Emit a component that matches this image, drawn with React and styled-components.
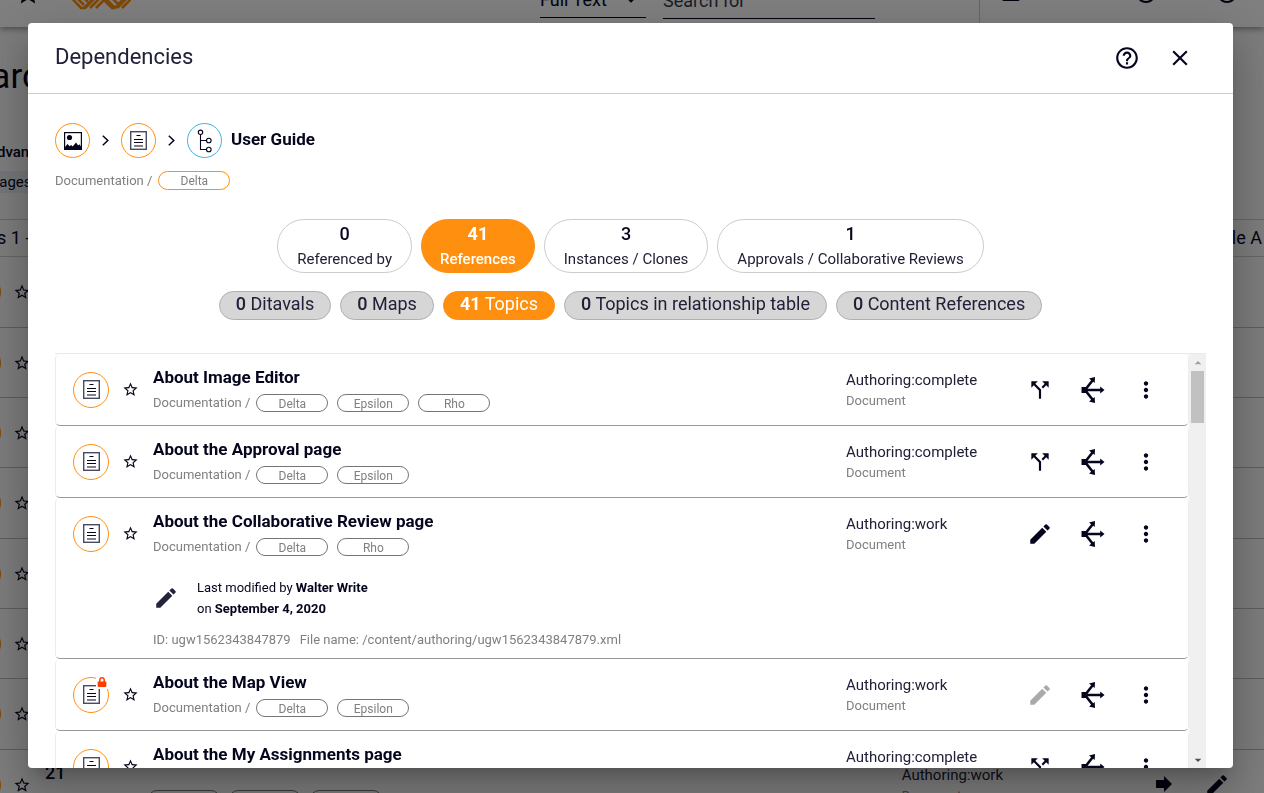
import React from "react";
import styled, { createGlobalStyle } from "styled-components";
import { FaLock } from "react-icons/fa";
import {
  MdArrowDropDown,
  MdArrowDropUp,
  MdCallSplit,
  MdClose,
  MdEdit,
  MdForward,
  MdHelpOutline,
  MdMoreVert,
  MdStar,
  MdStarBorder,
  MdWebAsset,
} from "react-icons/md";

const ink = "#05051e";
const softInk = "#202038";
const orange = "#ff8f0e";
const blue = "#3db1e5";
const grey = "#808080";

const GlobalStyle = createGlobalStyle`
  *, *::before, *::after { box-sizing: border-box; }
  body {
    margin: 0;
    overflow: hidden;
    background: #f8f8f8;
    color: ${ink};
    font-family: Roboto, "Liberation Sans", sans-serif;
    font-size: 15px;
  }
  button, input, select { font: inherit; color: inherit; }
  svg { display: block; flex: none; }
  h1, h2, h3, p, ul, ol { margin: 0; padding: 0; }
  ul, ol { list-style: none; }
`;

/* ---------- page behind the dialog ---------- */

const Page = styled.div`
  height: 100vh;
  overflow: hidden;
`;

const TopBar = styled.header`
  display: flex;
  align-items: center;
  height: 68px;
  margin-top: -41px;
  padding: 0 25px 0 14px;
  background: #fff;
  box-shadow: 0 2px 6px rgba(0, 0, 0, 0.4);
`;

const Brand = styled.div`
  display: flex;
  align-items: center;
  gap: 25px;
  width: 526px;
`;

const SearchTools = styled.form`
  display: flex;
  align-items: flex-end;
  align-self: flex-end;
  gap: 17px;
  padding-bottom: 8px;
`;

const SelectBox = styled.div`
  display: flex;
  align-items: center;
  width: 106px;
  margin-bottom: 1px;
  border-bottom: 1px solid ${ink};
`;

const ModeSelect = styled.select`
  flex: 1;
  min-width: 0;
  height: 36px;
  padding: 0;
  border: 0;
  background: none;
  appearance: none;
  font-size: 18px;
`;

const SearchInput = styled.input`
  width: 212px;
  height: 36px;
  padding: 0;
  border: 0;
  border-bottom: 1px solid ${ink};
  background: none;
  font-size: 18px;
  &::placeholder { color: ${ink}; opacity: 0.8; }
`;

const TopActions = styled.div`
  display: flex;
  flex: 1;
  align-items: center;
  justify-content: space-between;
  align-self: stretch;
  margin-left: 104px;
  padding-left: 19px;
  border-left: 1px solid #ccc;
`;

const AccountActions = styled.div`
  display: flex;
  gap: 57px;
`;

const PageTitle = styled.h1`
  margin: 30px 0 0 -48px;
  font-size: 35px;
  font-weight: 400;
  line-height: 40px;
`;

const PageTab = styled.p`
  margin: 44px 0 8px -13px;
  font-weight: 500;
  line-height: 22px;
`;

const PageSubTab = styled.p`
  width: 160px;
  background: #e6ebf3;
  line-height: 22px;
  text-indent: -18px;
`;

const ResultBar = styled.div`
  display: flex;
  justify-content: space-between;
  height: 38px;
  margin-top: 26px;
  padding-right: 2px;
  border-top: 1px solid #ccc;
  border-bottom: 1px solid #ccc;
  font-size: 18px;
  line-height: 36px;
`;

const ResultCount = styled.span`
  margin-left: -53px;
`;

const ResultRow = styled.li`
  display: flex;
  align-items: center;
  gap: 12px;
  height: 70px;
  margin-left: -35px;
  padding-right: 37px;
  border-bottom: 1px solid #bbb;
  &:nth-child(3n + 1) { height: 71px; }
`;

const ResultName = styled.div`
  flex: 1;
  padding-left: 2px;
`;

const ResultActions = styled.div`
  display: flex;
  gap: 28px;
  width: 212px;
  padding-left: 137px;
`;

/* ---------- dialog ---------- */

const Overlay = styled.div`
  position: fixed;
  inset: 0;
  display: flex;
  padding: 23px 31px 25px 28px;
  background: rgba(0, 0, 0, 0.5);
`;

const Dialog = styled.section`
  display: flex;
  flex: 1;
  flex-direction: column;
  min-width: 0;
  overflow: hidden;
  border-radius: 4px;
  background: #fff;
  box-shadow: 0 11px 15px -7px rgba(0, 0, 0, 0.2), 0 24px 38px 3px rgba(0, 0, 0, 0.14),
    0 9px 46px 8px rgba(0, 0, 0, 0.12);
`;

const DialogHeader = styled.header`
  display: flex;
  align-items: center;
  justify-content: space-between;
  height: 71px;
  padding: 0 40px 0 27px;
  border-bottom: 1px solid #ccc;
`;

const DialogTitle = styled.h2`
  padding-bottom: 3px;
  color: ${softInk};
  font-size: 22px;
  font-weight: 400;
  line-height: 26px;
`;

const HeaderButtons = styled.div`
  display: flex;
  gap: 27px;
`;

const IconButton = styled.button`
  display: grid;
  place-items: center;
  width: ${(p) => p.$size || 26}px;
  height: ${(p) => p.$size || 26}px;
  padding: 0;
  border: 0;
  background: none;
  color: ${(p) => (p.disabled ? "#aaa" : ink)};
`;

const DialogBody = styled.div`
  display: flex;
  flex: 1;
  flex-direction: column;
  min-height: 0;
  padding: 29px 27px 0;
`;

const Breadcrumb = styled.ol`
  display: flex;
  align-items: center;
`;

const Crumb = styled.li`
  display: flex;
  align-items: center;
`;

const CrumbArrow = styled.svg`
  margin: 0 12px;
`;

const Circle = styled.span`
  display: grid;
  flex: none;
  place-items: center;
  width: ${(p) => p.$size || 36}px;
  height: ${(p) => p.$size || 36}px;
  border: 1px solid ${(p) => p.$color || orange};
  border-radius: 50%;
`;

const CrumbName = styled.strong`
  font-size: 17px;
  font-weight: 700;
  line-height: 24px;
  padding: 0 0 3px 9px;
`;

const Meta = styled.div`
  display: flex;
  align-items: center;
  margin-top: ${(p) => p.$top || 0}px;
  color: ${grey};
  font-size: 13px;
  line-height: 18px;
`;

const Tags = styled.ul`
  display: flex;
  gap: 9px;
  margin-left: 6px;
`;

const Tag = styled.li`
  width: 72px;
  height: ${(p) => (p.$accent ? 19 : 18)}px;
  border: 1px solid ${(p) => (p.$accent ? orange : "#757575")};
  border-radius: 10px;
  font-size: 12px;
  line-height: 18px;
  text-align: center;
`;

const TabRow = styled.div`
  display: flex;
  justify-content: center;
  gap: 9px;
  margin-top: ${(p) => p.$top}px;
`;

const Tab = styled.button`
  height: 54px;
  padding: 3px ${(p) => (p.$active ? 18 : 19)}px 0;
  border: 1px solid ${(p) => (p.$active ? orange : "#ccc")};
  border-radius: 27px;
  background: ${(p) => (p.$active ? orange : "#fff")};
  color: ${(p) => (p.$active ? "#fff" : softInk)};
  font-size: 15px;
  font-weight: ${(p) => (p.$active ? 500 : 400)};
  line-height: 28px;
`;

const TabCount = styled.strong`
  display: block;
  color: ${(p) => (p.$active ? "#fff" : ink)};
  font-size: 18px;
  font-weight: ${(p) => (p.$active ? 700 : 500)};
  line-height: 22px;
`;

const Filter = styled.button`
  height: 29px;
  padding: 0 16px 3px;
  border: 1px solid ${(p) => (p.$active ? orange : "#b0b0b0")};
  border-radius: 15px;
  background: ${(p) => (p.$active ? orange : "#d6d6d6")};
  color: ${(p) => (p.$active ? "#fff" : softInk)};
  font-size: 18px;
  font-weight: 400;
  line-height: 24px;
  strong { font-weight: ${(p) => (p.$active ? 700 : 500)}; }
`;

const ListPane = styled.div`
  display: flex;
  flex: 1;
  min-height: 0;
  margin-top: 33px;
  border-top: 1px solid #eaeaea;
`;

const List = styled.ul`
  flex: 1;
  min-width: 0;
  overflow: hidden;
`;

const Item = styled.li`
  border: 1px solid #ececec;
  border-top: 0;
  border-bottom-color: #999;
  border-radius: 5px;
`;

const ItemMain = styled.div`
  display: grid;
  grid-template-columns: 36px 43px minmax(0, 1fr) 167px 159px;
  align-items: center;
  height: 71px;
  padding: 0 16px 0 17px;
`;

const DocBadge = styled.span`
  position: relative;
`;

const LockMark = styled.span`
  position: absolute;
  top: 0;
  right: 1px;
  padding: 0 1px 2px;
  background: #fff;
  color: #ff3d00;
`;

const ItemTitle = styled.h3`
  font-size: 17px;
  font-weight: 700;
  line-height: 24px;
`;

const ItemText = styled.div`
  padding: 0 0 3px 1px;
`;

const Status = styled.div`
  padding-top: 1px;
  color: ${softInk};
  line-height: 21px;
`;

const StatusKind = styled.p`
  color: ${grey};
  font-size: 13px;
  line-height: 20px;
`;

const Actions = styled.div`
  display: grid;
  grid-template-columns: repeat(3, 53px);
  justify-items: center;
`;

const Detail = styled.div`
  height: 89px;
  padding: 8px 0 0 97px;
`;

const Modified = styled.div`
  display: flex;
  align-items: center;
  gap: 18px;
  font-size: 13px;
  line-height: 21px;
  strong { font-weight: 700; }
`;

const FileInfo = styled.p`
  display: flex;
  gap: 9px;
  margin-top: 11px;
  color: ${grey};
  font-size: 13px;
  line-height: 20px;
`;

const ScrollTrack = styled.div`
  display: flex;
  flex-direction: column;
  align-items: center;
  width: 17px;
  background: #f0f0f0;
`;

const ScrollThumb = styled.div`
  flex: 1;
  width: 13px;
  &::before {
    content: "";
    display: block;
    height: 52px;
    background: #c1c1c1;
  }
`;

const ScrollEnd = styled.button`
  display: grid;
  place-items: center;
  width: 17px;
  height: 17px;
  padding: 0;
  border: 0;
  background: none;
  color: ${(p) => (p.disabled ? "#a0a0a0" : "#505050")};
`;

/* ---------- drawings ---------- */

const Chevron = () => (
  <CrumbArrow width="7" height="11" viewBox="0 0 7 11" fill="none" stroke={ink} strokeWidth="1.5" aria-hidden="true">
    <path d="M0.8 0.8L5.8 5.5L0.8 10.2" />
  </CrumbArrow>
);

const DocIcon = () => (
  <svg width="17" height="19" viewBox="0 0 17 19" fill="none" aria-hidden="true">
    <rect x="0.7" y="0.7" width="15.6" height="17.6" stroke="#4a4a60" strokeWidth="1.4" />
    <path d="M6.5 4.5h4M4 8.5h9M4 11.5h9M4 15h9" stroke={ink} strokeWidth="1.1" />
  </svg>
);

const ImageIcon = () => (
  <svg width="18" height="18" viewBox="0 0 18 18" aria-hidden="true">
    <rect x="0.6" y="0.6" width="16.8" height="16.8" fill="none" stroke={ink} strokeWidth="1.2" />
    <circle cx="5.5" cy="5.5" r="2.6" fill={ink} />
    <path d="M1 17v-2l2.5-3 2.2 2.2 1.5-1.2 1.5 1.500L12 10.500l2.200 3.100 1.200-1.400L17 14.500v2.500z" fill={ink} />
  </svg>
);

const MapIcon = () => (
  <svg width="16" height="24" viewBox="0 0 16 24" fill="none" stroke={ink} strokeWidth="1.1" aria-hidden="true">
    <circle cx="3.5" cy="3.3" r="2.2" />
    <circle cx="11.8" cy="11.5" r="2.3" />
    <circle cx="11.8" cy="20.5" r="2.3" />
    <path d="M3.5 5.5v15h6M3.5 11.5h6" />
  </svg>
);

const BranchesIcon = () => (
  <svg width="24" height="26" viewBox="0 0 24 26" aria-hidden="true">
    <path d="M0.5 10h5v6h-5z" fill={ink} />
    <path d="M2 13h18M4 13l7.5-9.5M4 13l7.5 9.5" stroke={ink} strokeWidth="2.6" fill="none" />
    <path d="M19.2 9.6L23.5 13l-4.3 3.4zM8 1.5L14 0l-.3 6zM8 24.5L14 26l-.3-6z" fill={ink} />
  </svg>
);

const LogoIcon = () => (
  <svg width="64" height="33" viewBox="0 0 64 33" fill="none" stroke={orange} strokeWidth="2.6" aria-hidden="true">
    <path d="M0 16l14 15h3L34 14M5 16l12 12M10 14l11 11M18 31L38 11M23 31L41 13M29 31l10-10M28 14l17 17h3L64 14M33 16l15 15M38 14l13 13M50 31l14-14M55 31l9-9" />
  </svg>
);

/* ---------- data ---------- */

const tabs = [
  { count: 0, label: "Referenced by" },
  { count: 41, label: "References", active: true },
  { count: 3, label: "Instances / Clones" },
  { count: 1, label: "Approvals / Collaborative Reviews" },
];

const filters = [
  { count: 0, label: "Ditavals" },
  { count: 0, label: "Maps" },
  { count: 41, label: "Topics", active: true },
  { count: 0, label: "Topics in relationship table" },
  { count: 0, label: "Content References" },
];

const topics = [
  { title: "About Image Editor", tags: ["Delta", "Epsilon", "Rho"], status: "Authoring:complete" },
  { title: "About the Approval page", tags: ["Delta", "Epsilon"], status: "Authoring:complete" },
  {
    title: "About the Collaborative Review page",
    tags: ["Delta", "Rho"],
    status: "Authoring:work",
    detail: {
      by: "Walter Write",
      on: "September 4, 2020",
      id: "ugw1562343847879",
      file: "/content/authoring/ugw1562343847879.xml",
    },
  },
  { title: "About the Map View", tags: ["Delta", "Epsilon"], status: "Authoring:work", locked: true },
  { title: "About the My Assignments page", tags: ["Delta", "Epsilon"], status: "Authoring:complete" },
];

const results = [
  {}, {}, {}, {}, {}, {}, {},
  { name: "21", tags: ["Delta", "Epsilon", "Rho"], status: "Authoring:work" },
];

const TagLine = ({ tags, accent, top }) => (
  <Meta $top={top}>
    Documentation /
    <Tags>
      {tags.map((t) => (
        <Tag key={t} $accent={accent}>{t}</Tag>
      ))}
    </Tags>
  </Meta>
);

const StatusBlock = ({ status }) => (
  <Status>
    <p>{status}</p>
    <StatusKind>Document</StatusKind>
  </Status>
);

const TopicItem = ({ topic }) => (
  <Item>
    <ItemMain>
      <DocBadge>
        <Circle><DocIcon /></Circle>
        {topic.locked && <LockMark><FaLock size={10} /></LockMark>}
      </DocBadge>
      <IconButton $size={43} aria-label="Add to favorites"><MdStarBorder size={17} /></IconButton>
      <ItemText>
        <ItemTitle>{topic.title}</ItemTitle>
        <TagLine tags={topic.tags} top={5} />
      </ItemText>
      <StatusBlock status={topic.status} />
      <Actions>
        {topic.status === "Authoring:work" ? (
          <IconButton disabled={topic.locked} aria-label="Edit"><MdEdit size={26} /></IconButton>
        ) : (
          <IconButton aria-label="Branch"><MdCallSplit size={26} /></IconButton>
        )}
        <IconButton aria-label="Dependencies"><BranchesIcon /></IconButton>
        <IconButton aria-label="More"><MdMoreVert size={26} /></IconButton>
      </Actions>
    </ItemMain>
    {topic.detail && (
      <Detail>
        <Modified>
          <MdEdit size={26} opacity={0.88} />
          <div>
            <p>Last modified by <strong>{topic.detail.by}</strong></p>
            <p>on <strong>{topic.detail.on}</strong></p>
          </div>
        </Modified>
        <FileInfo>
          <span>ID: {topic.detail.id}</span>
          <span>File name: {topic.detail.file}</span>
        </FileInfo>
      </Detail>
    )}
  </Item>
);

const SearchPage = () => (
  <Page>
    <TopBar>
      <Brand>
        <MdStar size={28} />
        <LogoIcon />
      </Brand>
      <SearchTools>
        <SelectBox>
          <ModeSelect aria-label="Search mode"><option>Full Text</option></ModeSelect>
          <MdArrowDropDown size={30} />
        </SelectBox>
        <SearchInput aria-label="Search for" placeholder="Search for" />
      </SearchTools>
      <TopActions>
        <MdWebAsset size={24} />
        <AccountActions>
          <MdHelpOutline size={24} />
          <MdHelpOutline size={24} />
        </AccountActions>
      </TopActions>
    </TopBar>
    <PageTitle>Search</PageTitle>
    <PageTab>Advanced</PageTab>
    <PageSubTab>Images</PageSubTab>
    <ResultBar>
      <ResultCount>Results 1 -</ResultCount>
      <span>Title A</span>
    </ResultBar>
    <ul>
      {results.map((r, i) => (
        <ResultRow key={i}>
          <Circle />
          <MdStarBorder size={18} />
          {r.name && (
            <>
              <ResultName>
                <TabCount>{r.name}</TabCount>
                <TagLine tags={r.tags} top={6} />
              </ResultName>
              <StatusBlock status={r.status} />
              <ResultActions>
                <MdForward size={24} />
                <MdEdit size={26} />
              </ResultActions>
            </>
          )}
        </ResultRow>
      ))}
    </ul>
  </Page>
);

export default function App() {
  return (
    <>
      <GlobalStyle />
      <SearchPage />
      <Overlay>
        <Dialog role="dialog" aria-modal="true" aria-labelledby="dialog-title">
          <DialogHeader>
            <DialogTitle id="dialog-title">Dependencies</DialogTitle>
            <HeaderButtons>
              <IconButton aria-label="Help"><MdHelpOutline size={26} /></IconButton>
              <IconButton aria-label="Close"><MdClose size={26} /></IconButton>
            </HeaderButtons>
          </DialogHeader>
          <DialogBody>
            <Breadcrumb>
              <Crumb><Circle $size={35}><ImageIcon /></Circle><Chevron /></Crumb>
              <Crumb><Circle $size={35}><DocIcon /></Circle><Chevron /></Crumb>
              <Crumb>
                <Circle $size={35} $color={blue}><MapIcon /></Circle>
                <CrumbName>User Guide</CrumbName>
              </Crumb>
            </Breadcrumb>
            <TagLine tags={["Delta"]} accent top={13} />
            <TabRow $top={29}>
              {tabs.map((t) => (
                <Tab key={t.label} $active={t.active}>
                  <TabCount $active={t.active}>{t.count}</TabCount>
                  {t.label}
                </Tab>
              ))}
            </TabRow>
            <TabRow $top={18}>
              {filters.map((f) => (
                <Filter key={f.label} $active={f.active}>
                  <strong>{f.count}</strong> {f.label}
                </Filter>
              ))}
            </TabRow>
            <ListPane>
              <List>
                {topics.map((t) => <TopicItem key={t.title} topic={t} />)}
              </List>
              <ScrollTrack>
                <ScrollEnd disabled aria-label="Scroll up"><MdArrowDropUp size={16} /></ScrollEnd>
                <ScrollThumb />
                <ScrollEnd aria-label="Scroll down"><MdArrowDropDown size={16} /></ScrollEnd>
              </ScrollTrack>
            </ListPane>
          </DialogBody>
        </Dialog>
      </Overlay>
    </>
  );
}
